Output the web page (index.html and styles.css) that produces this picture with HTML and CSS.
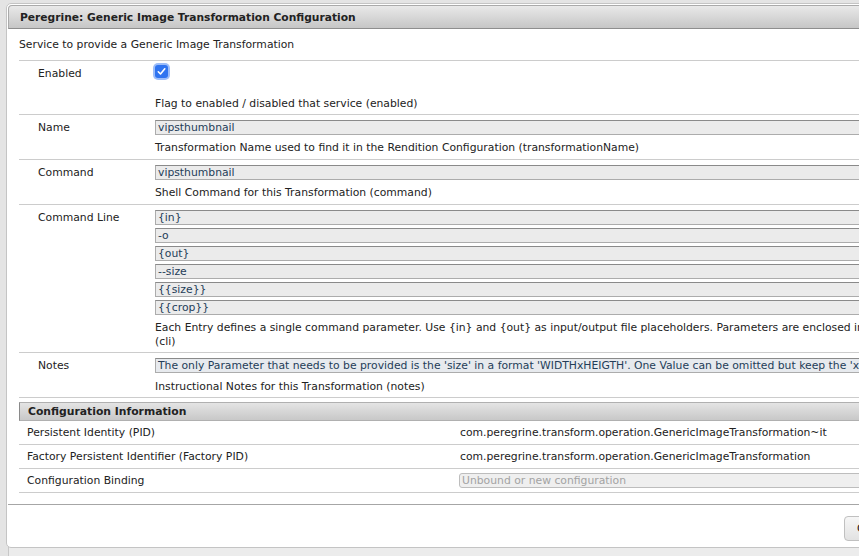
FILE: index.html
```html
<!DOCTYPE html>
<html>
<head>
<meta charset="utf-8">
<title>Peregrine: Generic Image Transformation Configuration</title>
<link rel="stylesheet" href="styles.css">
</head>
<body>
<div class="page">
  <div class="page-text">Cached 4xx Processor Policies</div>
  <div class="page-box"></div>
</div>
<div class="dialog">
  <div class="titlebar">Peregrine: Generic Image Transformation Configuration</div>
  <div class="content">
    <p class="intro">Service to provide a Generic Image Transformation</p>
    <div class="props">
      <div class="row check-row">
        <div class="label">Enabled</div>
        <div class="value">
          <div class="check-wrap"><span class="check"><svg width="9" height="9" viewBox="0 0 9 9"><path d="M1.3 4.8 L3.5 7 L7.8 1.8" fill="none" stroke="#fff" stroke-width="1.6" stroke-linecap="round" stroke-linejoin="round"/></svg></span></div>
          <div class="desc">Flag to enabled / disabled that service (enabled)</div>
        </div>
      </div>
      <div class="row">
        <div class="label">Name</div>
        <div class="value">
          <div class="input">vipsthumbnail</div>
          <div class="desc">Transformation Name used to find it in the Rendition Configuration (transformationName)</div>
        </div>
      </div>
      <div class="row">
        <div class="label">Command</div>
        <div class="value">
          <div class="input">vipsthumbnail</div>
          <div class="desc">Shell Command for this Transformation (command)</div>
        </div>
      </div>
      <div class="row cli-row">
        <div class="label">Command Line</div>
        <div class="value">
          <div class="input multi">{in}</div>
          <div class="input multi">-o</div>
          <div class="input multi">{out}</div>
          <div class="input multi">--size</div>
          <div class="input multi">{{size}}</div>
          <div class="input multi">{{crop}}</div>
          <div class="desc">Each Entry defines a single command parameter. Use {in} and {out} as input/output file placeholders. Parameters are enclosed in double curly brackets and are replaced at runtime<br>(cli)</div>
        </div>
      </div>
      <div class="row notes-row">
        <div class="label">Notes</div>
        <div class="value">
          <div class="input notes">The only Parameter that needs to be provided is the 'size' in a format 'WIDTHxHEIGTH'. One Value can be omitted but keep the 'x'</div>
          <div class="desc">Instructional Notes for this Transformation (notes)</div>
        </div>
      </div>
    </div>
    <div class="info">
      <div class="info-head">Configuration Information</div>
      <div class="info-row">
        <div class="info-label">Persistent Identity (PID)</div>
        <div class="info-value">com.peregrine.transform.operation.GenericImageTransformation~it</div>
      </div>
      <div class="info-row">
        <div class="info-label">Factory Persistent Identifier (Factory PID)</div>
        <div class="info-value">com.peregrine.transform.operation.GenericImageTransformation</div>
      </div>
      <div class="info-row">
        <div class="info-label">Configuration Binding</div>
        <div class="info-value"><div class="select">Unbound or new configuration</div></div>
      </div>
    </div>
  </div>
  <div class="buttonpane"><button class="btn">Cancel</button></div>
</div>
</body>
</html>
```

FILE: styles.css
```css
html, body {
  margin: 0;
  padding: 0;
}
body {
  background: #e4e4e4;
  font-family: "DejaVu Sans", Verdana, sans-serif;
  font-size: 10.8px;
  color: #222;
  overflow: hidden;
  width: 859px;
  height: 556px;
}
.page {
  height: 556px;
  overflow: hidden;
}
.page-text {
  margin: -10px 0 0 45px;
  line-height: 12px;
  color: #555;
}
.page-box {
  margin: 537px 0 0 8px;
  height: 20px;
  border-top: 1px solid #c8c8c8;
  border-left: 1px solid #c8c8c8;
  background: #ececec;
}
.dialog {
  position: absolute;
  left: 6px;
  top: 3px;
  width: 1000px;
  background: #fff;
  border: 1px solid #c4c4c4;
  border-radius: 5px;
  padding: 1px;
  box-sizing: border-box;
}
.titlebar {
  height: 24px;
  box-sizing: border-box;
  border: 1px solid #aaa;
  border-bottom-color: #8e8e8e;
  border-radius: 4px 4px 0 0;
  background: linear-gradient(#e9e9e9, #c6c6c6);
  font-weight: bold;
  font-size: 10.7px;
  line-height: 21px;
  padding: 1px 11px 0 11px;
  color: #222;
}
.content {
  padding: 0 0 0 11px;
}
.intro {
  margin: 9px 0 8px 0;
  line-height: 14px;
}
.props {
  border-bottom: 1px solid #ccc;
}
.row {
  display: flex;
  border-top: 1px solid #ccc;
  padding: 5px 0 4px 0;
}
.row.check-row {
  padding-bottom: 3px;
}
.row.cli-row {
  padding-bottom: 3px;
}
.row.notes-row {
  padding-bottom: 3px;
}
.row.notes-row .desc {
  margin-top: 6px;
}
.label {
  width: 117px;
  flex: none;
  padding: 1px 0 0 19px;
  line-height: 14px;
}
.value {
  flex: 1;
  min-width: 0;
}
.check-wrap {
  height: 25px;
}
.check {
  display: inline-flex;
  align-items: center;
  justify-content: center;
  width: 13px;
  height: 13px;
  margin: -1px 0 0 0;
  background: #2f74f0;
  border-radius: 3px;
  box-shadow: 0 0 0 2px rgba(90, 145, 245, 0.6);
  vertical-align: top;
}
.input {
  height: 15px;
  box-sizing: border-box;
  border: 1px solid #acacac;
  border-top-color: #8a8a8a;
  background: #ebebeb;
  color: #243d58;
  line-height: 14px;
  padding: 0 2px;
  white-space: nowrap;
  overflow: hidden;
}
.input.multi {
  margin-bottom: 3px;
}
.input.multi:nth-of-type(6) {
  margin-bottom: 0;
}
.input.notes {
  background: #e7eaee;
}
.desc {
  margin-top: 5px;
  padding-top: 1px;
  line-height: 14px;
  white-space: nowrap;
}
.info {
  margin-top: 4px;
}
.info-head {
  height: 19px;
  box-sizing: border-box;
  border: 1px solid #b0b0b0;
  border-left-color: #8a8a8a;
  background: linear-gradient(#e4e4e4, #c8c8c8);
  font-weight: bold;
  line-height: 18px;
  padding-left: 8px;
}
.info-row {
  display: flex;
  border-bottom: 1px solid #ccc;
  padding: 5px 0 4px 0;
  line-height: 14px;
}
.info-label {
  width: 433px;
  padding-left: 8px;
  flex: none;
}
.info-value {
  flex: 1;
}
.select {
  height: 15px;
  box-sizing: border-box;
  border: 1px solid #bdbdbd;
  border-radius: 3px;
  background: #efefef;
  color: #a3a3a3;
  line-height: 13px;
  padding: 0 2px;
  margin: -1px 0 0 -1px;
}
.buttonpane {
  margin-top: 11px;
  border-top: 1px solid #a6a6a6;
  height: 42px;
  padding-left: 836px;
  box-sizing: border-box;
  padding-top: 11px;
}
.btn {
  height: 25px;
  font-family: "DejaVu Sans", Verdana, sans-serif;
  font-size: 11px;
  border: 1px solid #c0c0c0;
  border-radius: 4px;
  background: linear-gradient(#f6f6f6, #e2e2e2);
  padding: 0 12px;
  color: #222;
}
```
